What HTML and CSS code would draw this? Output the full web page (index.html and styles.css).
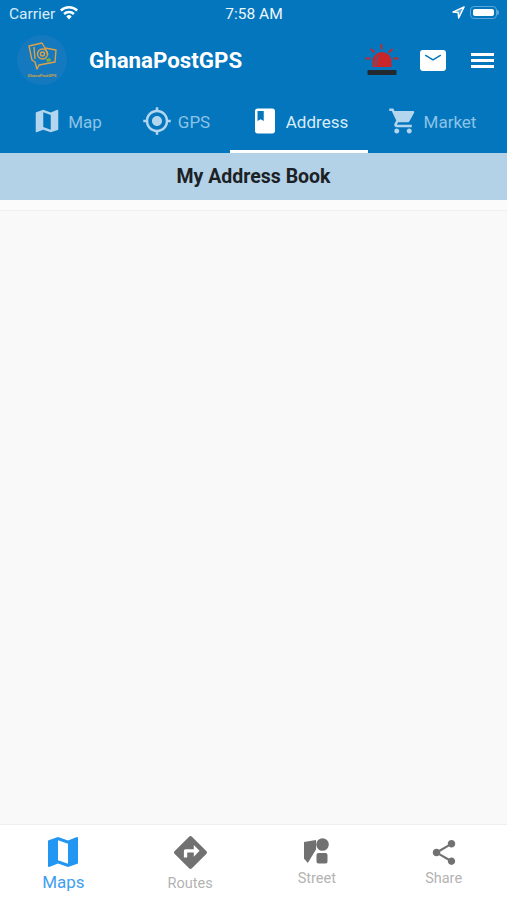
FILE: index.html
```html
<!DOCTYPE html>
<html lang="en">
<head>
<meta charset="utf-8">
<title>GhanaPostGPS</title>
<link rel="stylesheet" href="styles.css">
</head>
<body>
<div class="app">
  <div class="top">
    <div class="status">
      <div class="status-left">
        <span>Carrier</span>
        <svg class="wifi" viewBox="0 0 20 15"><path d="M10 14.600l3-3.300a4.300 4.300 0 0 0-6 0zM5.400 9.600a6.600 6.600 0 0 1 9.200 0l1.800-2a9.400 9.400 0 0 0-12.800 0zM1.800 5.700a11.900 11.900 0 0 1 16.400 0l1.800-2a14.600 14.600 0 0 0-20 0z"/></svg>
      </div>
      <div class="status-time">7:58 AM</div>
      <div class="status-right">
        <svg class="loc" viewBox="0 0 14 14"><path d="M13 1L1 6.500l5.600.5.6 6z" fill="#5aa6d8" stroke="#fff" stroke-width="1.500" stroke-linejoin="round"/></svg>
        <div class="battery"><div class="battery-fill"></div></div>
        <div class="battery-tip"></div>
      </div>
    </div>
    <header class="header">
      <svg class="logo" viewBox="0 0 50 50">
        <circle cx="25" cy="25" r="25" fill="#1479be"/>
        <g fill="none" stroke="#d9a24c" stroke-width="1.400" stroke-linejoin="round">
          <path d="M12 11L25 8l3 5 11 2-1 12-16 3-2 4-2-7-3-2z"/>
          <circle cx="25.500" cy="19" r="5"/>
          <circle cx="25.500" cy="19" r="2"/>
          <path d="M28 13l3 7M17 12l1 12"/>
        </g>
        <path d="M29 24l4-1 1 3-4 1z" fill="#7fae3c"/>
        <text x="25" y="42" class="logo-text">GhanaPostGPS</text>
      </svg>
      <div class="brand">GhanaPostGPS</div>
      <div class="actions">
        <svg class="alert" viewBox="0 0 34 32">
          <path d="M16.500 0v5.500M5.800 4.800l3.700 3.700M27.500 4.800l-3.700 3.700M.5 14.500h5M28.500 14.500h5" stroke="#c9262b" stroke-width="1.800" fill="none"/>
          <path d="M7.500 23v-6a9.500 9 0 0 1 19 0v6z" fill="#c9262b"/>
          <path d="M11 22v-5a6 6 0 0 1 3-5.500" fill="none" stroke="#0476bd" stroke-width="1"/>
          <rect x="2.500" y="26" width="29" height="5" rx="1" fill="#23292f"/>
        </svg>
        <svg class="mail" viewBox="2 4 20 16"><path fill="#fff" d="M20 4H4c-1.100 0-1.990.9-1.990 2L2 18c0 1.100.9 2 2 2h16c1.100 0 2-.9 2-2V6c0-1.100-.9-2-2-2z"/><path d="M6 7.800l6 3.700 6-3.700" fill="none" stroke="#0476bd" stroke-width="1.100"/></svg>
        <div class="menu"><span></span><span></span><span></span></div>
      </div>
    </header>
    <nav class="tabs">
      <div class="tab">
        <svg class="tab-icon" viewBox="0 0 24 24"><path d="M20.500 3l-.16.03L15 5.100 9 3 3.360 4.900c-.21.07-.36.25-.36.48V20.500c0 .28.22.5.5.5l.16-.03L9 18.900l6 2.100 5.640-1.900c.21-.07.36-.25.36-.48V3.500c0-.28-.22-.5-.5-.5zM15 19l-6-2.110V5l6 2.110V19z"/></svg>
        <span>Map</span>
      </div>
      <div class="tab">
        <svg class="tab-icon" viewBox="0 0 24 24"><path d="M12 8c-2.210 0-4 1.790-4 4s1.790 4 4 4 4-1.790 4-4-1.790-4-4-4zm8.940 3c-.46-4.170-3.770-7.480-7.940-7.940V1h-2v2.060C6.830 3.520 3.520 6.830 3.060 11H1v2h2.060c.46 4.170 3.770 7.480 7.940 7.940V23h2v-2.060c4.170-.46 7.480-3.770 7.940-7.940H23v-2h-2.060zM12 19c-3.870 0-7-3.130-7-7s3.130-7 7-7 7 3.130 7 7-3.130 7-7 7z"/></svg>
        <span>GPS</span>
      </div>
      <div class="tab active">
        <svg class="tab-icon" viewBox="0 0 24 24"><path d="M18 2H6c-1.100 0-2 .9-2 2v16c0 1.100.9 2 2 2h12c1.100 0 2-.9 2-2V4c0-1.100-.9-2-2-2zM6 4h5v8l-2.500-1.500L6 12V4z"/></svg>
        <span>Address</span>
      </div>
      <div class="tab">
        <svg class="tab-icon" viewBox="0 0 24 24"><path d="M7 18c-1.100 0-1.990.9-1.990 2S5.900 22 7 22s2-.9 2-2-.9-2-2-2zM1 2v2h2l3.600 7.590-1.350 2.450c-.16.28-.25.61-.25.96 0 1.100.9 2 2 2h12v-2H7.420c-.14 0-.25-.11-.25-.25l.03-.12.9-1.630h7.450c.75 0 1.410-.41 1.750-1.030l3.580-6.490c.08-.14.12-.31.12-.48 0-.55-.45-1-1-1H5.210l-.94-2H1zm16 16c-1.100 0-1.990.9-1.990 2s.89 2 1.990 2 2-.9 2-2-.9-2-2-2z"/></svg>
        <span>Market</span>
      </div>
    </nav>
  </div>
  <div class="title-bar">My Address Book</div>
  <main class="content"><div class="spacer"></div></main>
  <footer class="bottom">
    <div class="bottom-item selected">
      <svg class="b-icon maps" viewBox="3 3 18 18" preserveAspectRatio="none"><path d="M20.500 3l-.16.03L15 5.100 9 3 3.360 4.900c-.21.07-.36.25-.36.48V20.500c0 .28.22.5.5.5l.16-.03L9 18.900l6 2.100 5.640-1.900c.21-.07.36-.25.36-.48V3.500c0-.28-.22-.5-.5-.5zM15 19l-6-2.110V5l6 2.110V19z"/></svg>
      <span>Maps</span>
    </div>
    <div class="bottom-item routes-item">
      <svg class="b-icon routes" viewBox="2 2 20 20"><path d="M21.710 11.290l-9-9c-.39-.39-1.020-.39-1.410 0l-9 9c-.39.39-.39 1.020 0 1.410l9 9c.39.39 1.020.39 1.410 0l9-9c.39-.38.39-1.010 0-1.410zM14 14.500V12h-4v3H8v-4c0-.55.45-1 1-1h5V7.500l3.500 3.500-3.500 3.500z"/></svg>
      <span>Routes</span>
    </div>
    <div class="bottom-item street-item">
      <svg class="b-icon street" viewBox="0 0 26 26"><path d="M0 4l12-2v9.500L3.800 25 0 20.500z"/><circle cx="18.500" cy="6.500" r="6.300"/><rect x="12.500" y="15" width="11" height="10.500" rx="2"/></svg>
      <span>Street</span>
    </div>
    <div class="bottom-item share-item">
      <svg class="b-icon share" viewBox="3 2 18 20"><path d="M18 16.080c-.76 0-1.440.3-1.960.77L8.910 12.700c.05-.23.09-.46.09-.7s-.04-.47-.09-.7l7.050-4.110c.54.5 1.250.81 2.040.81 1.660 0 3-1.340 3-3s-1.340-3-3-3-3 1.340-3 3c0 .24.04.47.09.7L8.040 9.810C7.500 9.310 6.790 9 6 9c-1.660 0-3 1.340-3 3s1.340 3 3 3c.79 0 1.500-.31 2.040-.81l7.120 4.160c-.05.21-.08.43-.08.65 0 1.610 1.310 2.920 2.920 2.920 1.610 0 2.920-1.310 2.920-2.920s-1.310-2.920-2.920-2.920z"/></svg>
      <span>Share</span>
    </div>
  </footer>
</div>
</body>
</html>
```
FILE: styles.css
```css
* { box-sizing: border-box; }
html, body { margin: 0; padding: 0; }
body { font-family: Roboto, "Liberation Sans", sans-serif; background: #f9f9f9; }
.app { width: 507px; height: 900px; display: flex; flex-direction: column; overflow: hidden; }
.top { background: #0476bd; height: 153px; flex: none; color: #fff; }

.status { height: 28px; display: grid; grid-template-columns: 1fr auto 1fr; align-items: center; padding: 0 8px 1px 9px; font-size: 15.500px; }
.status-left { display: flex; align-items: center; gap: 5px; color: #d9edf9; font-size: 15.500px; }
.wifi { width: 18px; height: 14px; fill: #fff; margin-top: -1px; }
.status-time { color: #eef7fc; }
.status-right { display: flex; align-items: center; justify-content: flex-end; padding-bottom: 2px; }
.loc { width: 13px; height: 13px; margin-right: 5px; }
.battery { width: 27px; height: 13px; border: 1px solid #5aa6d8; border-radius: 4px; padding: 2px; }
.battery-fill { height: 100%; background: #fff; border-radius: 2px; }
.battery-tip { width: 2px; height: 5px; background: #5aa6d8; border-radius: 0 2px 2px 0; }

.header { height: 64px; display: flex; align-items: center; padding: 0 13px 0 17px; }
.logo { width: 50px; height: 50px; flex: none; }
.logo-text { font-size: 4.200px; font-weight: 700; fill: #c9a24a; text-anchor: middle; }
.brand { margin-left: 22px; font-size: 22.300px; font-weight: 700; color: #fff; }
.actions { margin-left: auto; display: flex; align-items: center; }
.alert { width: 34px; height: 32px; margin-right: 21px; }
.mail { width: 26px; height: 21px; margin-right: 25px; }
.menu { width: 23px; display: flex; flex-direction: column; gap: 3px; }
.menu span { display: block; height: 3px; background: #fff; }

.tabs { height: 61px; display: grid; grid-template-columns: 110px 108px 138px 128px; padding: 0 0 0 12px; }
.tab { display: flex; align-items: center; justify-content: center; gap: 6px; padding-bottom: 3px; font-size: 17px; color: #8cc3e6; }
.tab span { padding-top: 2px; }
.tab-icon { width: 30px; height: 30px; fill: #b3d6ee; flex: none; }
.tab.active { color: #d8ecf8; border-bottom: 3px solid #fff; padding-bottom: 0; }
.tab.active .tab-icon { fill: #fff; }

.title-bar { height: 47px; flex: none; background: #b3d2e7; display: flex; align-items: center; justify-content: center; font-size: 19.500px; font-weight: 700; color: #1c2126; }
.content { flex: 1; background: #f9f9f9; }
.spacer { height: 11px; border-bottom: 1px solid #f0f0f0; background: #fbfbfb; }

.bottom { height: 76px; flex: none; background: #fff; border-top: 1px solid #eeeeee; display: grid; grid-template-columns: repeat(4, 1fr); }
.bottom-item { display: flex; flex-direction: column; align-items: center; font-size: 14.500px; line-height: 17px; color: #b3b3b3; }
.b-icon { fill: #717171; flex: none; }
.selected { color: #3f9eef; font-size: 17px; line-height: 20px; padding-top: 12px; }
.selected .b-icon { fill: #2196f3; }
.maps { width: 30px; height: 30px; margin-bottom: 5px; }
.routes-item { padding-top: 11px; }
.routes { width: 33px; height: 33px; margin-bottom: 6px; }
.street-item { padding-top: 13px; }
.street { width: 26px; height: 26px; margin-bottom: 6px; }
.share-item { padding-top: 15px; }
.share { width: 24px; height: 25px; margin-bottom: 5px; }
```
